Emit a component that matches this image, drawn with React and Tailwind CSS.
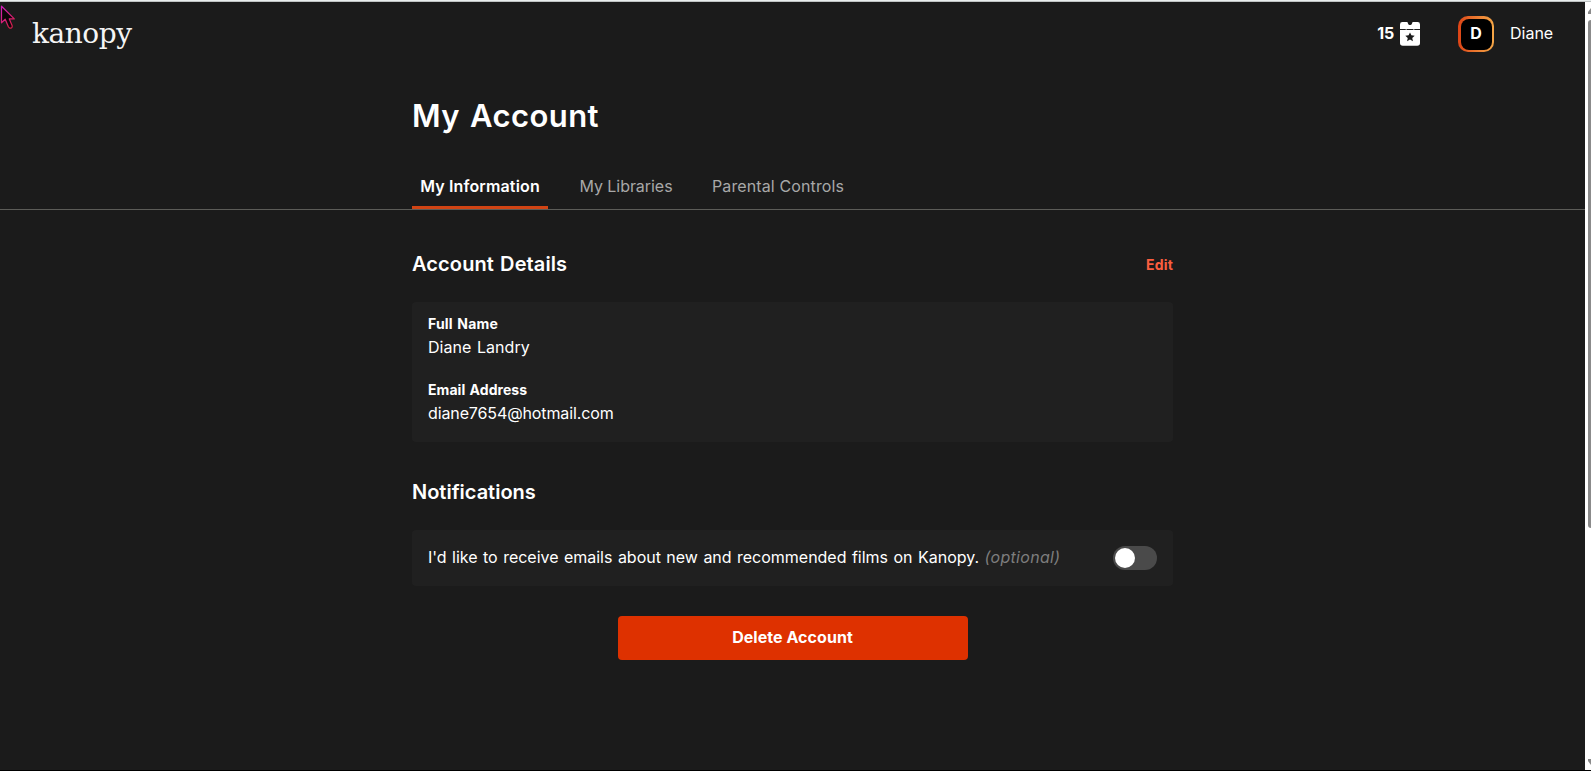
import React, { useState } from 'react';
import clsx from 'clsx';

const tabs = [
  { id: 'info', label: 'My Information', width: 'w-[136px]', tracking: 'tracking-[0.15px]' },
  { id: 'libraries', label: 'My Libraries', width: 'w-[108px]', tracking: 'tracking-[-0.05px]' },
  { id: 'parental', label: 'Parental Controls', width: 'w-[148px]', tracking: 'tracking-[0.12px]' },
];

const TicketIcon = () => (
  <svg width="20" height="24" viewBox="0 0 20 24" fill="#fff">
    <path d="M2.4 0h5l.8 1.9q.5 1.1 1.3 1.1h1q.8 0 1.3-1.1l.8-1.9h5A2.4 2.4 0 0 1 20 2.4V7H0V2.4A2.4 2.4 0 0 1 2.4 0z" />
    <path d="M0 8h20v13a2.8 2.8 0 0 1-2.8 2.8H2.8A2.8 2.8 0 0 1 0 21z" />
    <path d="M5.6 7h1.2v1H5.6zM13.2 7h1.2v1h-1.2z" opacity=".6" />
    <path
      d="m10 10.4 1.4 2.95 3.3.35-2.45 2.25.7 3.25L10 17.55 7.05 19.2l.7-3.25L5.3 13.7l3.3-.35z"
      fill="#1b1b1b"
    />
  </svg>
);

const Pointer = () => (
  <svg className="absolute left-0 top-[3px]" width="16" height="25" viewBox="0 0 16 25">
    <defs>
      <linearGradient id="pointer" x1="0" y1="0" x2="0.4" y2="1">
        <stop offset="0" stopColor="#d21fc0" />
        <stop offset="1" stopColor="#d81f4f" />
      </linearGradient>
    </defs>
    <path
      d="M1.5 1.2v16.6l3.7-3.6 3.2 7.6q1.3 2.2 3.2 1 1-.9.5-2.3l-2.8-6.6h5z"
      fill="#0c0508"
      stroke="url(#pointer)"
      strokeWidth="1.2"
      strokeLinejoin="round"
    />
  </svg>
);

const Scrollbar = () => (
  <div className="flex w-1.5 flex-col items-end bg-white">
    <svg width="3" height="18" viewBox="0 0 3 18" className="shrink-0">
      <path d="M0 12V10l3-4v6z" fill="#8b8b8b" />
    </svg>
    <div className="h-[508px] w-[3px] rounded-l-[3px] bg-[#8b8b8b]" />
    <div className="flex-1" />
    <svg width="3" height="12" viewBox="0 0 3 12" className="shrink-0">
      <path d="M0 1h3v6L0 3z" fill="#8b8b8b" />
    </svg>
  </div>
);

const Field = ({ label, labelClass, value, valueClass }) => (
  <div>
    <p className={clsx('text-sm leading-5 font-bold', labelClass)}>{label}</p>
    <p className={clsx('mt-px text-base', valueClass)}>{value}</p>
  </div>
);

const App = () => {
  const [activeTab, setActiveTab] = useState('info');
  const [subscribed, setSubscribed] = useState(false);

  return (
    <div className="flex h-screen flex-col overflow-hidden border-b border-black bg-[#1b1b1b] font-['Inter',sans-serif] text-white [word-spacing:1px]">
      <div className="h-0.5 shrink-0 border-b border-[#bfc3c3] bg-[#e9eeee]" />

      <div className="flex min-h-0 flex-1">
        <div className="relative flex-1">
          <header className="flex h-[66px] items-center justify-between pr-8 pl-8">
            <a href="#" className="-mt-0.5 font-['DejaVu_Serif',serif] text-[28px] leading-10 tracking-[-0.45px] text-[#f4f4f4]">
              kanopy
            </a>
            <div className="flex items-center pb-0.5">
              <span className="-mt-0.5 text-base font-bold tracking-[-0.2px]">15</span>
              <div className="ml-1.5">
                <TicketIcon />
              </div>
              <div className="ml-[38px] flex size-9 rounded-[10px] bg-linear-to-r from-[#dc4215] to-[#f5a747] p-[2.5px]">
                <div className="flex flex-1 items-center justify-center rounded-lg bg-black pb-0.5 text-base font-bold">D</div>
              </div>
              <span className="-mt-0.5 ml-4 w-[43px] text-base">Diane</span>
            </div>
          </header>

          <h1 className="mx-auto mt-7 w-[761px] text-[31px] leading-10 font-semibold tracking-[0.4px] [word-spacing:2px]">
            My Account
          </h1>

          <nav className="mt-[38px] border-b border-[#5c5c58]">
            <div className="mx-auto flex w-[761px] gap-6">
              {tabs.map((tab) => (
                <button
                  key={tab.id}
                  type="button"
                  onClick={() => setActiveTab(tab.id)}
                  className={clsx(
                    'border-b-[3px] pb-2 text-center text-base whitespace-nowrap',
                    tab.width,
                    tab.tracking,
                    activeTab === tab.id
                      ? 'border-[#d14414] font-semibold text-white'
                      : 'border-transparent text-[#a8a8a8]'
                  )}
                >
                  {tab.label}
                </button>
              ))}
            </div>
          </nav>

          <main className="mx-auto w-[761px] pt-10">
            <div className="flex items-center justify-between">
              <h2 className="text-xl leading-7 font-semibold tracking-[0.1px]">Account Details</h2>
              <button type="button" className="pt-0.5 text-sm leading-5 font-bold tracking-[0.2px] text-[#fb5e3f]">
                Edit
              </button>
            </div>

            <div className="mt-6 flex h-[140px] flex-col gap-[21px] rounded bg-[#202020] px-4 pt-3">
              <Field
                label="Full Name"
                labelClass="tracking-[0.2px]"
                value="Diane Landry"
                valueClass="tracking-[0.05px]"
              />
              <Field
                label="Email Address"
                labelClass="tracking-[0.05px]"
                value="diane7654@hotmail.com"
                valueClass="tracking-[-0.12px]"
              />
            </div>

            <h2 className="mt-9 text-xl leading-7 font-semibold">Notifications</h2>

            <div className="mt-6 flex h-14 items-center justify-between rounded bg-[#202020] px-4">
              <p className="-mt-0.5 text-base tracking-[-0.015px]">
                I'd like to receive emails about new and recommended films on Kanopy.{' '}
                <em className="tracking-[0.3px] text-[#7d7d7d]">(optional)</em>
              </p>
              <button
                type="button"
                role="switch"
                aria-checked={subscribed}
                onClick={() => setSubscribed(!subscribed)}
                className={clsx(
                  'flex h-6 w-11 items-center rounded-full px-0.5',
                  subscribed ? 'justify-end bg-[#de3100]' : 'bg-[#4a4a4a]'
                )}
              >
                <span className="size-5 rounded-full bg-white" />
              </button>
            </div>

            <button
              type="button"
              className="mx-auto mt-[30px] block h-11 w-[350px] rounded bg-[#de3100] pb-0.5 text-base font-bold tracking-[0.05px]"
            >
              Delete Account
            </button>
          </main>

          <Pointer />
        </div>
        <Scrollbar />
      </div>
    </div>
  );
};

export default App;
